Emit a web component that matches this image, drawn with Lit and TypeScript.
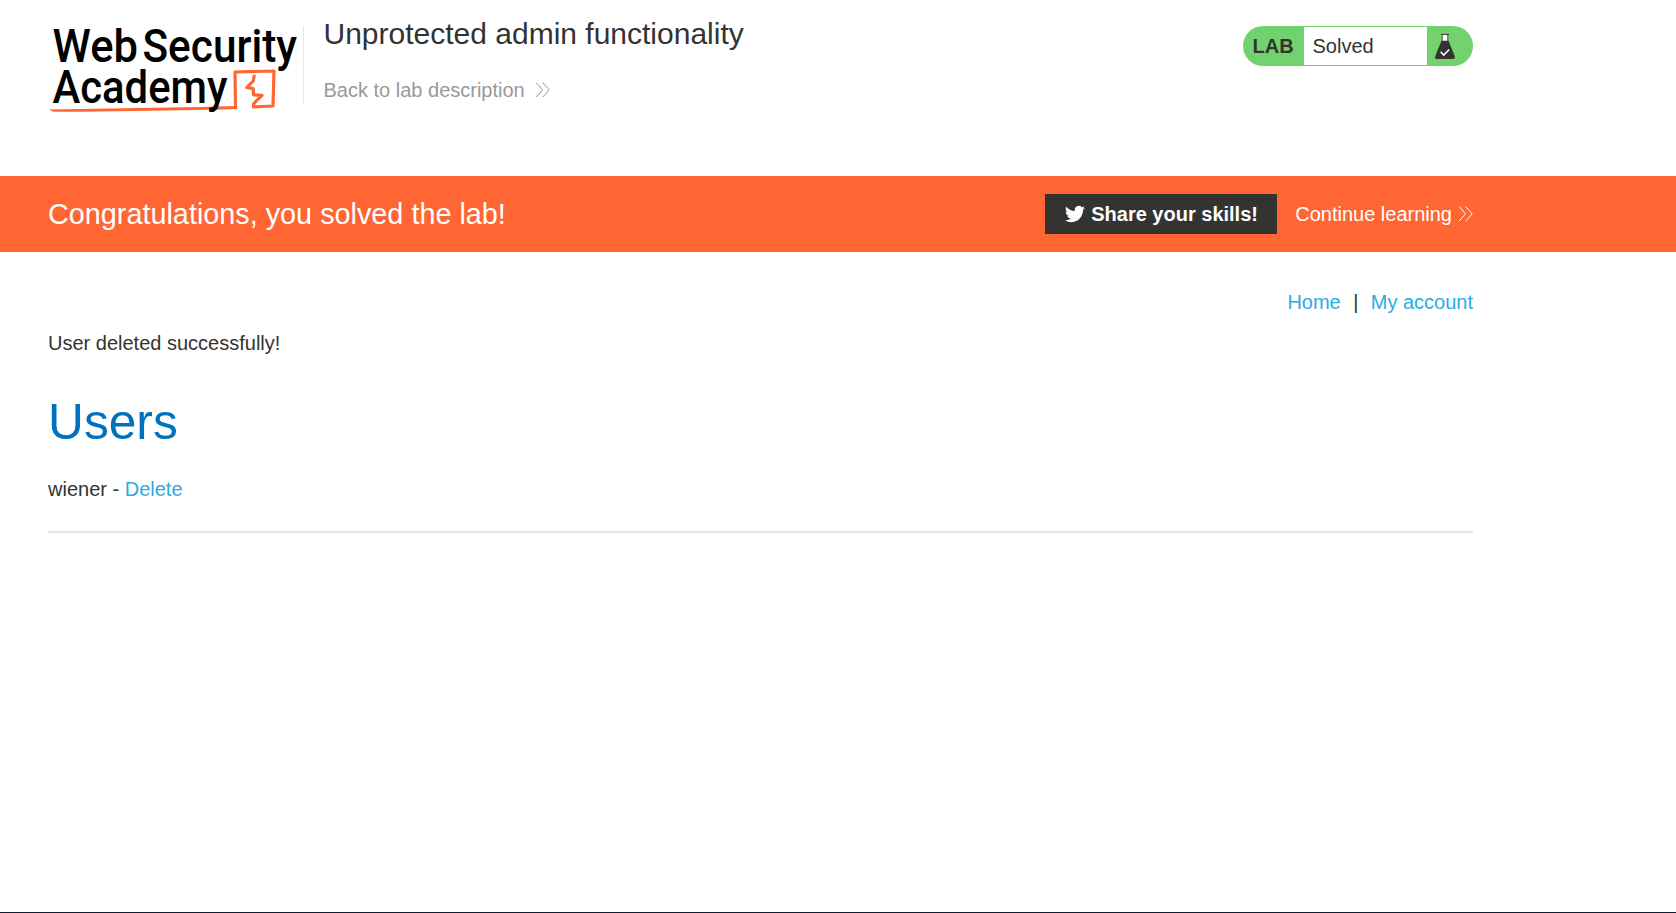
import { LitElement, html, css } from "lit";
import { customElement } from "lit/decorators.js";

const chevrons = html`<svg class="chevrons" width="16" height="18" viewBox="0 0 16 18" aria-hidden="true">
  <path d="M1 1.5 L7.6 8.8 L1 16.2 M7.6 1.5 L14.2 8.8 L7.6 16.2" fill="none" stroke="currentColor" stroke-width="1" />
</svg>`;

@customElement("academy-logo")
export class AcademyLogo extends LitElement {
  static styles = css`
    :host { display: block; width: 256px; height: 100px; }
    svg { display: block; overflow: visible; }
    .word { font-family: Roboto, "Liberation Sans", sans-serif; font-weight: 500; font-size: 46.5px; fill: #000; }
  `;
  render() {
    return html`<svg width="256" height="100" viewBox="40 15 256 100" role="img" aria-label="Web Security Academy">
      <path d="M235.5 107 L235 72 L274 71 L273 106 L253.5 107 L253.5 103.8 L262 95.4 L253.6 94.8 L253.2 88.6 L246.8 87.5 L253.2 81 L254.2 76" fill="none" stroke="#ff6633" stroke-linejoin="round" stroke-linecap="round" stroke-width="3.2" />
      <path d="M49 109.4 L110 108.6 L200 107 L236.5 106 L236.8 109 L214 109.8 L150 110.8 L84 111.8 L53 111.8 Z" fill="#ff6633" />
      <text class="word" x="52.5" y="61.5" textLength="85.5" lengthAdjust="spacingAndGlyphs">Web</text>
      <text class="word" x="142.5" y="61.5" textLength="154.5" lengthAdjust="spacingAndGlyphs">Security</text>
      <text class="word" x="52.5" y="103" textLength="175" lengthAdjust="spacingAndGlyphs">Academy</text>
    </svg>`;
  }
}

@customElement("lab-status")
export class LabStatus extends LitElement {
  static styles = css`
    :host { display: flex; box-sizing: border-box; width: 230px; height: 40px; border-radius: 20px; background: #72d36e; color: #333332; overflow: hidden; line-height: 40px; }
    .tag { width: 61px; box-sizing: border-box; padding-left: 9.5px; font-weight: 700; line-height: 41px; }
    .state { width: 123px; box-sizing: border-box; margin: 1px 0; padding-left: 8.5px; background: #fff; line-height: 39px; }
    .flask { display: block; margin: 7px 0 0 7px; }
  `;
  render() {
    return html`<span class="tag">LAB</span><span class="state">Solved</span>
      <svg class="flask" width="22" height="27" viewBox="0 0 22 27" aria-hidden="true">
        <path d="M7.6 1.5 H14.4 V8 H7.6Z" fill="#fff" />
        <path d="M7 1.4 H15 M8.1 1.5 V8 M13.9 1.5 V8" fill="none" stroke="#333332" stroke-width="1" />
        <path d="M7.5 7.8 H14.5 L20.7 23 Q21.5 26 19.5 26 H2.5 Q.5 26 1.3 23Z" fill="#333332" />
        <path d="M6.7 18.8 L9.7 22 L15.2 16.5" fill="none" stroke="#fff" stroke-width="1.6" />
      </svg>`;
  }
}

@customElement("app-root")
export class AppRoot extends LitElement {
  static styles = css`
    :host { display: flex; flex-direction: column; box-sizing: border-box; height: 913px; overflow: hidden; background: #fff; border-bottom: 1px solid #0c1c30; color: #333332; font: 20px/28px "Liberation Sans", Arial, sans-serif; }
    a { text-decoration: none; color: #29ace6; }
    .wrap { box-sizing: border-box; width: 1425px; margin-left: 48px; }
    .header { display: flex; height: 176px; flex: none; align-items: flex-start; }
    .logo { margin: 15px 0 0 -8px; }
    .title-box { flex: 1; height: 78px; margin: 26px 0 0 7px; box-sizing: border-box; border-left: 1px solid #e6e6e6; padding-left: 19.5px; }
    h2 { margin: -10px 0 0; font-size: 30px; line-height: 36px; font-weight: 400; }
    .back { display: flex; align-items: center; gap: 10px; margin-top: 24px; color: #999; }
    .status { margin-top: 26px; }
    .banner { flex: none; height: 76px; background: #ff6633; color: #fff; }
    .banner-row { display: flex; align-items: center; width: 1426px; height: 76px; }
    h4 { margin: 0; flex: 1; font-size: 28.8px; line-height: 40px; font-weight: 400; }
    .share { display: flex; align-items: center; box-sizing: border-box; width: 232px; height: 40px; padding-left: 20px; background: #333332; color: #fff; font-weight: 700; }
    .bird { width: 20px; height: 20px; margin-right: 6px; }
    .continue { display: flex; align-items: center; gap: 6px; color: #fff; margin-left: 18px; }
    .nav { display: flex; justify-content: flex-end; margin-top: 36px; }
    .bar { margin: 0 12.4px; }
    .message { margin: 13px 0 0; }
    h1 { margin: 35px 0 0; font-size: 49.7px; line-height: 60px; font-weight: 400; color: #0071bc; }
    .user { margin-top: 23px; }
    .rule { height: 2px; margin-top: 28px; background: #e5e5e5; }
  `;
  render() {
    return html`
      <header class="header wrap">
        <academy-logo class="logo"></academy-logo>
        <div class="title-box">
          <h2>Unprotected admin functionality</h2>
          <a class="back">Back to lab description ${chevrons}</a>
        </div>
        <lab-status class="status"></lab-status>
      </header>
      <section class="banner">
        <div class="wrap banner-row">
          <h4>Congratulations, you solved the lab!</h4>
          <a class="share">
            <svg class="bird" viewBox="0 0 24 24" aria-hidden="true"><path fill="#fff" d="M23.95 4.57a10 10 0 0 1-2.82.77 4.96 4.96 0 0 0 2.16-2.72c-.95.55-2 .96-3.13 1.18a4.92 4.92 0 0 0-8.38 4.48C7.69 8.1 4.07 6.13 1.64 3.16a4.92 4.92 0 0 0 1.52 6.57 4.9 4.9 0 0 1-2.23-.61v.06a4.92 4.92 0 0 0 3.95 4.83 5 5 0 0 1-2.21.08 4.94 4.94 0 0 0 4.6 3.42A9.87 9.87 0 0 1 0 19.54a13.99 13.99 0 0 0 7.55 2.21c9.05 0 14-7.5 14-13.98 0-.21 0-.42-.02-.63a9.94 9.94 0 0 0 2.42-2.57z" /></svg>
            Share your skills!
          </a>
          <a class="continue">Continue learning ${chevrons}</a>
        </div>
      </section>
      <main class="wrap">
        <nav class="nav"><a>Home</a><span class="bar">|</span><a>My account</a></nav>
        <p class="message">User deleted successfully!</p>
        <h1>Users</h1>
        <div class="user">wiener - <a>Delete</a></div>
        <div class="rule"></div>
      </main>`;
  }
}
